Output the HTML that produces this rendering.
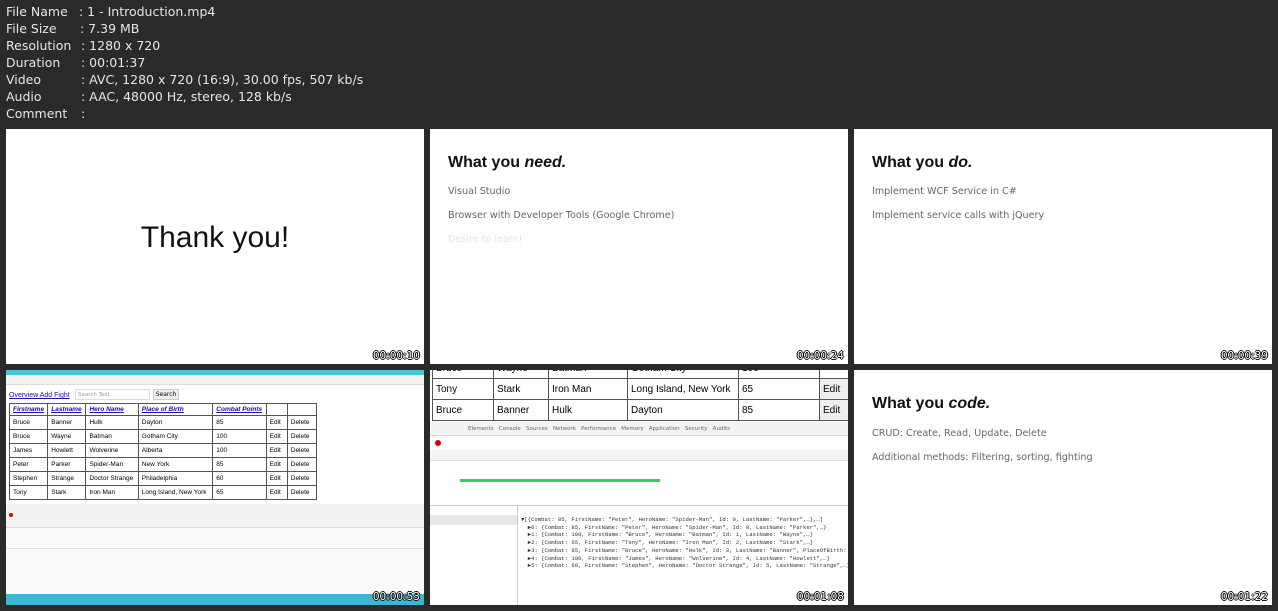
<!DOCTYPE html>
<html><head><meta charset="utf-8"><style>
*{margin:0;padding:0;box-sizing:border-box}
body{width:1278px;height:611px;background:#2a2a2a;position:relative;overflow:hidden;font-family:"DejaVu Sans","Liberation Sans",sans-serif}
.hd{position:absolute;left:6px;color:#e6e6e6;font-size:12.5px;line-height:17px}
.hd span{position:absolute;white-space:nowrap}
.th{position:absolute;width:418px;height:235px;background:#fff;overflow:hidden}
.ts{position:absolute;right:4px;bottom:2px;color:#fff;font-size:10.5px;font-family:"DejaVu Sans",sans-serif;text-shadow:-1px 0 #000,1px 0 #000,0 -1px #000,0 1px #000}
.title{position:absolute;left:18px;top:25px;font-size:16px;font-weight:bold;color:#111;font-family:"Liberation Sans",sans-serif}
.it{position:absolute;left:18px;font-size:9.6px;color:#666;font-family:"DejaVu Sans",sans-serif}
table{border-collapse:collapse;font-family:"Liberation Sans",sans-serif;table-layout:fixed}
td{border:1px solid #555;padding:0 3px;white-space:nowrap;overflow:hidden}
.mono{font-family:"Liberation Mono",monospace;font-size:5.6px;color:#333;line-height:7.7px;white-space:pre}
</style></head><body>
<div class="hd" style="top:3px">
<span style="top:0">File Name</span><span style="left:73px;top:0">: 1 - Introduction.mp4</span>
<span style="top:17px">File Size</span><span style="left:74px;top:17px">: 7.39 MB</span>
<span style="top:34px">Resolution</span><span style="left:75px;top:34px">: 1280 x 720</span>
<span style="top:51px">Duration</span><span style="left:75px;top:51px">: 00:01:37</span>
<span style="top:68px">Video</span><span style="left:75px;top:68px">: AVC, 1280 x 720 (16:9), 30.00 fps, 507 kb/s</span>
<span style="top:85px">Audio</span><span style="left:75px;top:85px">: AAC, 48000 Hz, stereo, 128 kb/s</span>
<span style="top:102px">Comment</span><span style="left:75px;top:102px">:</span>
</div>

<div class="th" style="left:6px;top:129px">
<div style="position:absolute;left:0;right:0;top:92px;text-align:center;font-size:30px;color:#111;font-family:'Liberation Sans',sans-serif">Thank you!</div>
<div class="ts">00:00:10</div></div>

<div class="th" style="left:430px;top:129px">
<div class="title">What you <i>need.</i></div>
<div class="it" style="top:57px">Visual Studio</div>
<div class="it" style="top:81px">Browser with Developer Tools (Google Chrome)</div>
<div class="it" style="top:105px;color:#e2e2e2">Desire to learn!</div>
<div class="ts">00:00:24</div></div>

<div class="th" style="left:854px;top:129px">
<div class="title">What you <i>do.</i></div>
<div class="it" style="top:57px">Implement WCF Service in C#</div>
<div class="it" style="top:81px">Implement service calls with jQuery</div>
<div class="ts">00:00:39</div></div>

<div class="th" style="left:6px;top:370px">
<div style="position:absolute;left:0;right:0;top:0;height:5px;background:#4cc4d6"></div>
<div style="position:absolute;left:0;right:0;top:5px;height:10px;background:#f2f2f2;border-bottom:1px solid #ddd"></div>
<div style="position:absolute;left:3px;top:22px;font-size:7px;font-family:'Liberation Sans';color:#1a0dab;text-decoration:underline">Overview Add Fight</div>
<div style="position:absolute;left:69px;top:19px;width:75px;height:11px;border:1px solid #ddd;font-size:5.5px;color:#999;padding:2px">Search Text</div>
<div style="position:absolute;left:147px;top:19px;width:26px;height:11px;background:#eee;border:1px solid #ccc;font-size:6px;text-align:center;line-height:10px">Search</div>
<table style="position:absolute;left:3px;top:33px;font-size:6.5px;width:308px">
<col style="width:38px"><col style="width:38px"><col style="width:52px"><col style="width:74px"><col style="width:53px"><col style="width:21px"><col style="width:29px">
<tr style="height:12px;color:#1a0dab;font-weight:bold;font-style:italic;text-decoration:underline"><td>Firstname</td><td>Lastname</td><td>Hero Name</td><td>Place of Birth</td><td>Combat Points</td><td></td><td></td></tr>
<tr style="height:14px"><td>Bruce</td><td>Banner</td><td>Hulk</td><td>Dayton</td><td>85</td><td>Edit</td><td>Delete</td></tr>
<tr style="height:14px"><td>Bruce</td><td>Wayne</td><td>Batman</td><td>Gotham City</td><td>100</td><td>Edit</td><td>Delete</td></tr>
<tr style="height:14px"><td>James</td><td>Howlett</td><td>Wolverine</td><td>Alberta</td><td>100</td><td>Edit</td><td>Delete</td></tr>
<tr style="height:14px"><td>Peter</td><td>Parker</td><td>Spider-Man</td><td>New York</td><td>85</td><td>Edit</td><td>Delete</td></tr>
<tr style="height:14px"><td>Stephen</td><td>Strange</td><td>Doctor Strange</td><td>Philadelphia</td><td>60</td><td>Edit</td><td>Delete</td></tr>
<tr style="height:14px"><td>Tony</td><td>Stark</td><td>Iron Man</td><td>Long Island, New York</td><td>65</td><td>Edit</td><td>Delete</td></tr>
</table>
<div style="position:absolute;left:0;right:0;top:134px;height:90px;background:#fafafa;border-top:1px solid #ccc"></div>
<div style="position:absolute;left:0;right:0;top:134px;height:24px;background:#f3f3f3;border-bottom:1px solid #ddd"></div>
<div style="position:absolute;left:3px;top:143px;width:4px;height:4px;border-radius:50%;background:#d00"></div>
<div style="position:absolute;left:0;right:0;top:178px;height:1px;background:#ddd"></div>
<div style="position:absolute;left:0;right:0;top:224px;height:11px;background:#3fb6cf"></div>
<div class="ts">00:00:53</div></div>

<div class="th" style="left:430px;top:370px">
<table style="position:absolute;left:2px;top:-13px;font-size:10px;width:420px">
<col style="width:61px"><col style="width:55px"><col style="width:79px"><col style="width:111px"><col style="width:81px"><col style="width:33px">
<tr style="height:21px"><td>Bruce</td><td>Wayne</td><td>Batman</td><td>Gotham City</td><td>100</td><td></td></tr>
<tr style="height:21px"><td>Tony</td><td>Stark</td><td>Iron Man</td><td>Long Island, New York</td><td>65</td><td style="background:#eee">Edit</td></tr>
<tr style="height:21px"><td>Bruce</td><td>Banner</td><td>Hulk</td><td>Dayton</td><td>85</td><td style="background:#eee">Edit</td></tr>
</table>
<div style="position:absolute;left:0;right:0;top:52px;height:183px;background:#fff;border-top:1px solid #ccc"></div>
<div style="position:absolute;left:0;right:0;top:52px;height:14px;background:#f3f3f3;border-bottom:1px solid #ddd;font-size:5.5px;color:#666;padding:4px 0 0 38px">Elements &nbsp; Console &nbsp; Sources &nbsp; Network &nbsp; Performance &nbsp; Memory &nbsp; Application &nbsp; Security &nbsp; Audits</div>
<div style="position:absolute;left:5px;top:70px;width:6px;height:6px;border-radius:50%;background:#d00"></div>
<div style="position:absolute;left:0;right:0;top:80px;height:11px;background:#f3f3f3;border-bottom:1px solid #ddd"></div>
<div style="position:absolute;left:30px;top:109px;width:200px;height:3px;background:#3c6"></div>
<div style="position:absolute;left:0;right:0;top:135px;height:1px;background:#ccc"></div>
<div style="position:absolute;left:87px;top:135px;width:1px;height:100px;background:#ccc"></div>
<div style="position:absolute;left:0;top:145px;width:87px;height:10px;background:#e8e8e8"></div>
<div class="mono" style="position:absolute;left:91px;top:146px">▼[{Combat: 85, FirstName: "Peter", HeroName: "Spider-Man", Id: 0, LastName: "Parker",…},…]
  ▶0: {Combat: 85, FirstName: "Peter", HeroName: "Spider-Man", Id: 0, LastName: "Parker",…}
  ▶1: {Combat: 100, FirstName: "Bruce", HeroName: "Batman", Id: 1, LastName: "Wayne",…}
  ▶2: {Combat: 65, FirstName: "Tony", HeroName: "Iron Man", Id: 2, LastName: "Stark",…}
  ▶3: {Combat: 85, FirstName: "Bruce", HeroName: "Hulk", Id: 3, LastName: "Banner", PlaceOfBirth: "Da
  ▶4: {Combat: 100, FirstName: "James", HeroName: "Wolverine", Id: 4, LastName: "Howlett",…}
  ▶5: {Combat: 60, FirstName: "Stephen", HeroName: "Doctor Strange", Id: 5, LastName: "Strange",…}</div>
<div class="ts">00:01:08</div></div>

<div class="th" style="left:854px;top:370px">
<div class="title">What you <i>code.</i></div>
<div class="it" style="top:58px">CRUD: Create, Read, Update, Delete</div>
<div class="it" style="top:82px">Additional methods: Filtering, sorting, fighting</div>
<div class="ts">00:01:22</div></div>
</body></html>
